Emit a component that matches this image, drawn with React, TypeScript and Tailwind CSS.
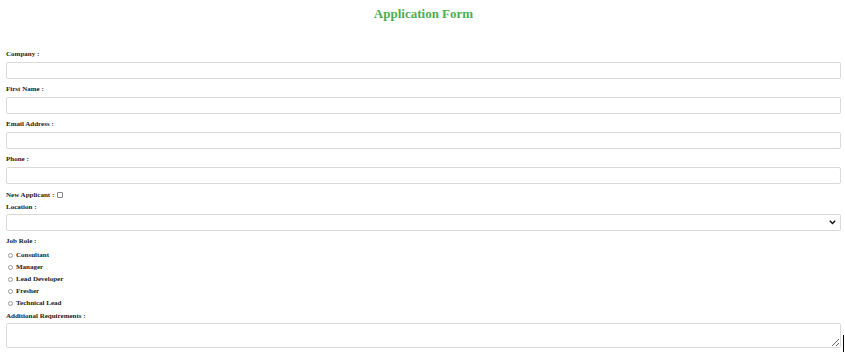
import React from "react";

const Label = ({ children }: { children: React.ReactNode }) => (
  <label className="block text-[7px] leading-[8px] font-bold text-[#222]">{children}</label>
);

const Field = ({ label }: { label: string }) => (
  <div className="mb-[1px] flex flex-col">
    <Label>{label}</Label>
    <input
      type="text"
      className="mt-[4px] h-[17px] w-full rounded-[2px] border border-[#d9d9d9] bg-white outline-none"
    />
  </div>
);

export default function App() {
  const roles = ["Consultant", "Manager", "Lead Developer", "Fresher", "Technical Lead"];
  return (
    <div
      className="relative h-[352px] w-[845px] overflow-hidden bg-white pl-[6px] pr-[4px]"
      style={{ fontFamily: '"Liberation Serif", "Times New Roman", serif' }}
    >
      <h1 className="pt-[6px] text-center text-[13px] leading-[16px] font-bold text-[#4caf50]">
        Application Form
      </h1>
      <form className="mt-[28px] flex flex-col gap-[5px]">
        <Field label="Company :" />
        <Field label="First Name :" />
        <Field label="Email Address :" />
        <Field label="Phone :" />
        <div className="mt-[1px] flex items-center gap-[3px]">
          <Label>New Applicant :</Label>
          <span className="inline-block h-[6px] w-[6px] rounded-[1px] border border-[#888] bg-white" />
        </div>
        <div className="-mt-[1px] flex flex-col">
          <Label>Location :</Label>
          <div className="relative mt-[3px] h-[17px] w-full rounded-[2px] border border-[#d9d9d9] bg-white">
            <svg
              className="absolute right-[4px] top-[5px]"
              width="7"
              height="5"
              viewBox="0 0 7 5"
            >
              <path d="M0.8 0.8 L3.5 3.5 L6.2 0.8" fill="none" stroke="#111" strokeWidth="1.4" />
            </svg>
          </div>
        </div>
        <div className="mt-[1px] flex flex-col gap-[4px]">
          <Label>Job Role :</Label>
          {roles.map((r, i) => (
            <div
              key={r}
              className={i === 0 ? "mt-[2px] flex items-center gap-[3px] pl-[2px]" : "flex items-center gap-[3px] pl-[2px]"}
            >
              <span className="inline-block h-[5px] w-[5px] rounded-full border border-[#999] bg-white" />
              <span className="text-[7px] leading-[8px] font-bold text-[#222]">{r}</span>
            </div>
          ))}
        </div>
        <div className="flex flex-col">
          <Label>Additional Requirements :</Label>
          <textarea className="mt-[3px] h-[25px] w-full rounded-[2px] border border-[#d9d9d9] bg-white outline-none" />
        </div>
      </form>
      <div className="absolute right-[1px] top-[335px] h-[17px] w-[1px] bg-black" />
    </div>
  );
}
